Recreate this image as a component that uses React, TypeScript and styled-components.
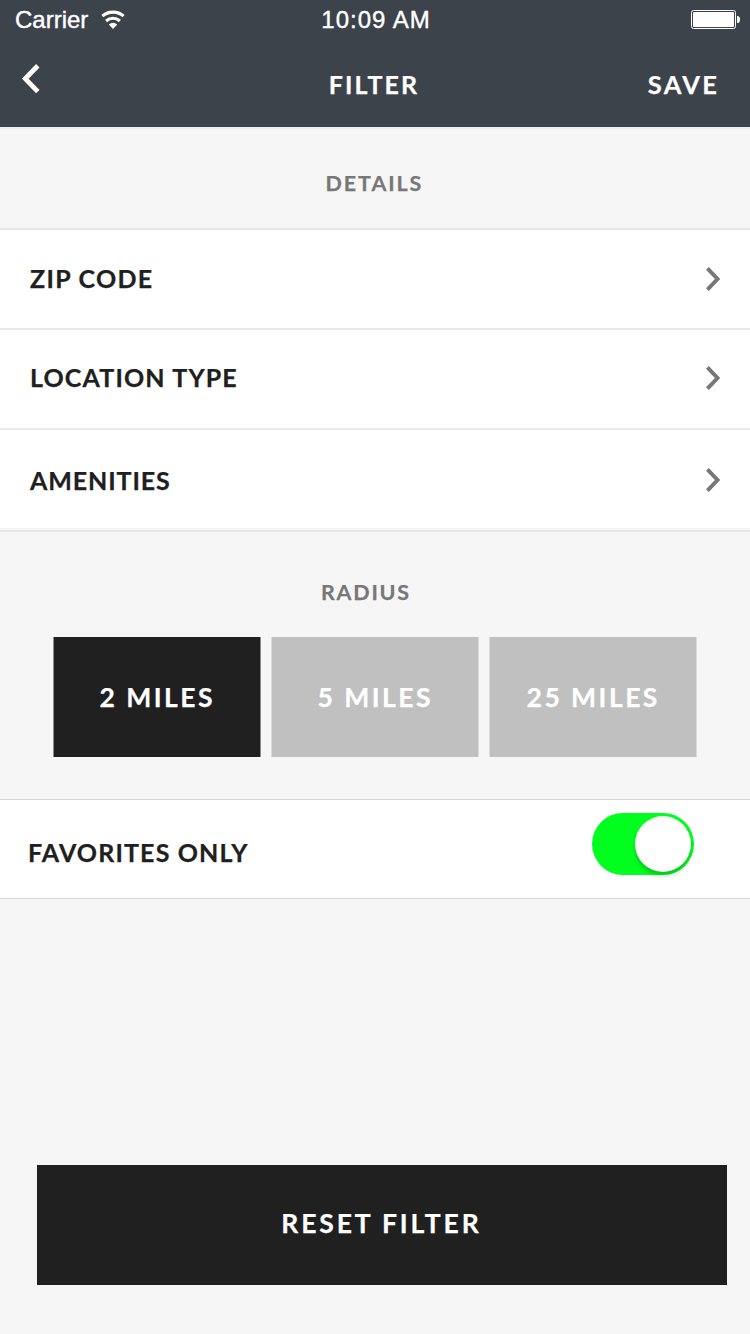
import React, { useState } from 'react';
import styled, { createGlobalStyle } from 'styled-components';

const GlobalStyle = createGlobalStyle`
  *, *::before, *::after { box-sizing: border-box; }
  body { margin: 0; background: #f5f5f5; }
  button { border: 0; padding: 0; margin: 0; background: none; font: inherit; color: inherit; cursor: pointer; }
`;

const Screen = styled.div`
  width: 750px;
  height: 1334px;
  display: flex;
  flex-direction: column;
  background: #f6f6f6;
  font-family: Lato, 'Open Sans', sans-serif;
  font-weight: 700;
  color: #202020;
  overflow: hidden;
`;

const Header = styled.header`
  height: 129px;
  flex: none;
  background: #3c434b;
  border-bottom: 2px solid #ededf0;
  color: #fff;
`;

const StatusBar = styled.div`
  height: 40px;
  display: grid;
  grid-template-columns: 1fr auto 1fr;
  align-items: center;
  padding: 0 10px 0 14px;
  font-family: 'Liberation Sans', Arial, sans-serif;
  font-weight: 400;
  font-size: 24px;
  line-height: 40px;
  -webkit-text-stroke: 0.4px #fff;
`;

const Carrier = styled.div`
  display: flex;
  align-items: center;
  gap: 13px;
  padding-left: 1px;
`;

const Clock = styled.div`
  letter-spacing: 1px;
  padding-right: 2px;
`;

const BatterySlot = styled.div`
  display: flex;
  justify-content: flex-end;
  padding-bottom: 1px;
`;

const NavBar = styled.nav`
  height: 87px;
  display: grid;
  grid-template-columns: 1fr auto 1fr;
  align-items: center;
  padding: 1px 33px 0 29px;
`;

const BackButton = styled.button`
  justify-self: start;
  display: flex;
  margin: 0 0 10px -7px;
`;

const SaveButton = styled.button`
  justify-self: end;
`;

const Label = styled.span<{ $size?: number; $spacing?: number }>`
  display: block;
  font-size: ${(p) => p.$size ?? 25}px;
  line-height: 32px;
  letter-spacing: ${(p) => p.$spacing ?? 1}px;
  margin-right: ${(p) => -(p.$spacing ?? 1)}px;
  white-space: nowrap;
  -webkit-text-stroke: 0.25px currentColor;
`;

const SectionTitle = styled.h2<{ $top: number; $height: number; $shift?: number }>`
  margin: 0;
  flex: none;
  height: ${(p) => p.$height}px;
  padding: ${(p) => p.$top}px ${(p) => p.$shift ?? 0}px 0 0;
  display: flex;
  justify-content: center;
  color: #777;
  font-weight: 700;
`;

const List = styled.div`
  flex: none;
  display: flex;
  flex-direction: column;
  border-top: 2px solid #e7e7e7;
  border-bottom: 2px solid #e6e6e6;
`;

const Row = styled.button<{ $top: number }>`
  height: 100px;
  display: flex;
  align-items: flex-start;
  justify-content: space-between;
  padding: ${(p) => p.$top}px 30px 0 30px;
  background: #fff;
  border-bottom: 2px solid #e9e9e9;

  &:last-child { border-bottom-color: #f4f4f4; }
`;

const Chevron = styled.svg<{ $top: number }>`
  display: block;
  margin-top: ${(p) => p.$top}px;
`;

const RadiusGroup = styled.div`
  flex: none;
  display: flex;
  gap: 10px;
  padding: 0 53px 42px;
`;

const RadiusButton = styled.button<{ $active: boolean }>`
  width: 208px;
  height: 120px;
  display: flex;
  align-items: center;
  justify-content: center;
  padding-right: 2px;
  background: ${(p) => (p.$active ? '#202020' : '#c0c0c0')};
  border: solid ${(p) => (p.$active ? '#8b8b8b' : '#dbdbdb')};
  border-width: 0 1px;
  color: #fff;
`;

const FavoritesRow = styled.div`
  flex: none;
  height: 100px;
  display: flex;
  align-items: flex-start;
  justify-content: space-between;
  padding: 13px 56px 0 28px;
  background: #fff;
  border: solid #d6d6d6;
  border-width: 1px 0;
`;

const FavoritesLabel = styled.div`
  padding-top: 23px;
`;

const Toggle = styled.button<{ $on: boolean }>`
  width: 102px;
  height: 62px;
  display: flex;
  justify-content: ${(p) => (p.$on ? 'flex-end' : 'flex-start')};
  padding: 3px;
  border-radius: 31px;
  background: ${(p) => (p.$on ? '#00ff1e' : '#d6d6d6')};
`;

const Knob = styled.span`
  width: 56px;
  height: 56px;
  border-radius: 50%;
  background: #fff;
  box-shadow: 0 4px 4px rgba(0, 0, 0, 0.2);
`;

const ResetButton = styled.button`
  flex: none;
  width: 690px;
  height: 120px;
  margin: auto 0 49px 37px;
  padding: 0 4px 4px 0;
  display: flex;
  align-items: center;
  justify-content: center;
  background: #202020;
  color: #fff;
`;

const WifiIcon = () => (
  <svg width="24" height="20" viewBox="0 0 24 20" fill="none" stroke="#fff" strokeWidth="3.1">
    <path d="M1.4 6.2C7.4 .8 16.6 .8 22.6 6.2" />
    <path d="M5.1 11C9.2 7.4 14.8 7.4 18.9 11" />
    <path d="M12 18.9 7.8 14.5Q12 11.2 16.2 14.5Z" fill="#fff" stroke="none" />
  </svg>
);

const BatteryIcon = () => (
  <svg width="49" height="19" viewBox="0 0 49 19">
    <rect x=".5" y=".5" width="44" height="18" rx="2" fill="none" stroke="#fff" />
    <rect x="2" y="2" width="41" height="15" rx=".8" fill="#fff" />
    <path d="M46 6h.6Q49 6 49 9.5T46.6 13H46Z" fill="#fff" />
  </svg>
);

const rows = [
  { name: 'ZIP CODE', top: 32, chevronTop: 5, spacing: 1.3 },
  { name: 'LOCATION TYPE', top: 31, chevronTop: 5, spacing: 1.15 },
  { name: 'AMENITIES', top: 34, chevronTop: 4, spacing: 0.9 },
];

const distances = ['2 MILES', '5 MILES', '25 MILES'];

export default function App() {
  const [radius, setRadius] = useState('2 MILES');
  const [favorites, setFavorites] = useState(true);

  return (
    <Screen>
      <GlobalStyle />
      <Header>
        <StatusBar>
          <Carrier>
            Carrier
            <WifiIcon />
          </Carrier>
          <Clock>10:09 AM</Clock>
          <BatterySlot>
            <BatteryIcon />
          </BatterySlot>
        </StatusBar>
        <NavBar>
          <BackButton aria-label="Back">
            <svg width="18" height="30" viewBox="0 0 18 30" fill="none" stroke="#fff" strokeWidth="4.8">
              <path d="M15.8 1.8 3.2 14.7 15.8 27.6" />
            </svg>
          </BackButton>
          <Label $spacing={2.1}>FILTER</Label>
          <SaveButton>
            <Label $size={25.5} $spacing={2.3}>SAVE</Label>
          </SaveButton>
        </NavBar>
      </Header>

      <SectionTitle $top={38} $height={99} $shift={3}>
        <Label $size={21.5} $spacing={1.9}>DETAILS</Label>
      </SectionTitle>
      <List>
        {rows.map((row) => (
          <Row key={row.name} $top={row.top}>
            <Label $spacing={row.spacing}>{row.name}</Label>
            <Chevron
              $top={row.chevronTop}
              width="14"
              height="24"
              viewBox="0 0 14 24"
              fill="none"
              stroke="#777"
              strokeWidth="3.9"
            >
              <path d="M1.4 1.4 11.5 12 1.4 22.6" />
            </Chevron>
          </Row>
        ))}
      </List>

      <SectionTitle $top={44} $height={105} $shift={20}>
        <Label $size={21.5} $spacing={1.8}>RADIUS</Label>
      </SectionTitle>
      <RadiusGroup>
        {distances.map((name) => (
          <RadiusButton key={name} $active={radius === name} onClick={() => setRadius(name)}>
            <Label $size={26.5} $spacing={2.45}>{name}</Label>
          </RadiusButton>
        ))}
      </RadiusGroup>

      <FavoritesRow>
        <FavoritesLabel>
          <Label $spacing={1.15}>FAVORITES ONLY</Label>
        </FavoritesLabel>
        <Toggle
          role="switch"
          aria-checked={favorites}
          aria-label="Favorites only"
          $on={favorites}
          onClick={() => setFavorites(!favorites)}
        >
          <Knob />
        </Toggle>
      </FavoritesRow>

      <ResetButton>
        <Label $size={26.5} $spacing={2.85}>RESET FILTER</Label>
      </ResetButton>
    </Screen>
  );
}
